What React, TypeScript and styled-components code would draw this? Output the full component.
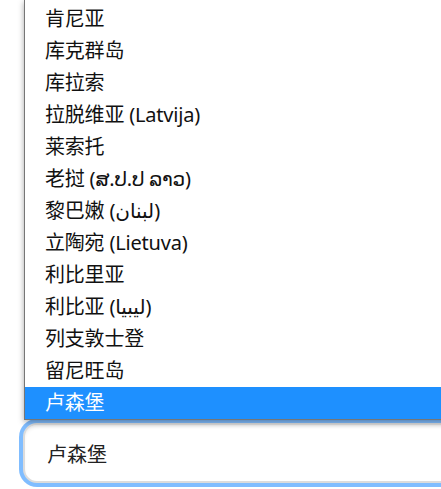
import styled, {createGlobalStyle} from "styled-components";

const countries = [
    "肯尼亚",
    "库克群岛",
    "库拉索",
    "拉脱维亚 (Latvija)",
    "莱索托",
    "老挝 (ສ.ປ.ປ ລາວ)",
    "黎巴嫩 (لبنان)",
    "立陶宛 (Lietuva)",
    "利比里亚",
    "利比亚 (ليبيا)",
    "列支敦士登",
    "留尼旺岛",
    "卢森堡",
]

const selected = "卢森堡"

const GlobalStyle = createGlobalStyle`
  html, body {
    margin: 0;
    padding: 0;
    overflow: hidden;
    background: #ffffff;
  }

  body {
    font-family: "Noto Sans", "Noto Sans CJK SC", "DejaVu Sans", sans-serif;
  }
`

export default function App() {
    return (
        <Page>
            <GlobalStyle/>
            <ListBox role="listbox">
                {countries.map((name) => (
                    <Option key={name} $active={name === selected} role="option">
                        {name}
                    </Option>
                ))}
            </ListBox>
            <FieldRing>
                <Field value={selected} readOnly/>
            </FieldRing>
        </Page>
    )
}

const Page = styled.div`
  display: flex;
  flex-direction: column;
  width: 441px;
  height: 489px;
  overflow: hidden;
`

const ListBox = styled.div`
  position: relative;
  z-index: 2;
  display: flex;
  flex-direction: column;
  margin: 0 -40px 0 24px;
  padding-top: 3px;
  background: #ffffff;
  border: 1px solid #767676;
  border-top: none;
  box-shadow: 0 2px 6px rgba(0, 0, 0, 0.35);
`

const Option = styled.div<{ $active: boolean }>`
  height: 32px;
  line-height: 32px;
  padding-left: 20px;
  font-size: 20px;
  letter-spacing: -0.2px;
  white-space: nowrap;
  color: ${(p) => (p.$active ? "#ffffff" : "#111111")};
  background: ${(p) => (p.$active ? "#1e90ff" : "transparent")};
`

const FieldRing = styled.div`
  display: flex;
  margin: 3px -30px 0 23px;
`

const Field = styled.input`
  flex: 1;
  height: 60px;
  box-sizing: border-box;
  padding: 0 22px;
  border: 2px solid #dcdcdc;
  border-radius: 14px;
  background: #ffffff;
  box-shadow: 0 0 0 4px #80bdff, inset 0 3px 4px -2px rgba(0, 0, 0, 0.12);
  font-family: "Noto Sans", "Noto Sans CJK SC", sans-serif;
  font-size: 20px;
  color: #222222;
  outline: none;
`
